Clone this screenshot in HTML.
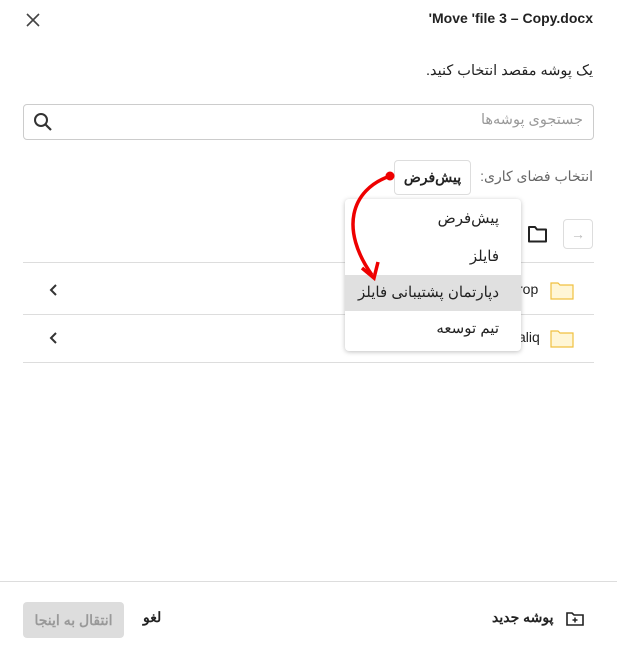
<!DOCTYPE html>
<html><head><meta charset="utf-8"><style>
*{box-sizing:border-box;margin:0;padding:0}
body{width:617px;height:653px;background:#fff;position:relative;overflow:hidden;font-family:"Liberation Sans","Noto Sans CJK SC",sans-serif;color:#222;font-size:14px}
.a{position:absolute}
.r{direction:rtl}
</style></head><body>
<svg class="a" style="left:25px;top:12px" width="16" height="16" viewBox="0 0 16 16"><path d="M2 2L14 14M14 2L2 14" stroke="#444" stroke-width="1.6"/></svg>
<div class="a" style="right:24px;top:10px;font-size:14px;font-weight:bold;color:#222">'Move 'file 3 – Copy.docx</div>
<div class="a r" style="right:24px;top:63px;font-size:14.5px">یک پوشه مقصد انتخاب کنید.</div>
<div class="a" style="left:23px;top:104px;width:571px;height:36px;border:1px solid #ccc;border-radius:4px"></div>
<svg class="a" style="left:33px;top:112px" width="20" height="20" viewBox="0 0 20 20"><circle cx="8" cy="8" r="6" fill="none" stroke="#333" stroke-width="2"/><path d="M12.5 12.5L18 18" stroke="#333" stroke-width="2.2"/></svg>
<div class="a r" style="right:34px;top:112px;color:#999;font-size:14.5px">جستجوی پوشه‌ها</div>
<div class="a r" style="right:24px;top:168px;color:#666;font-size:14px">انتخاب فضای کاری:</div>
<div class="a" style="left:394px;top:160px;width:77px;height:35px;border:1px solid #ddd;border-radius:4px;text-align:center;line-height:33px;font-weight:bold;font-size:14px">پیش‌فرض</div>
<div class="a" style="left:563px;top:219px;width:30px;height:30px;border:1px solid #ddd;border-radius:4px;color:#bbb;text-align:center;line-height:28px">→</div>
<svg class="a" style="left:527px;top:224px" width="22" height="20" viewBox="0 0 22 20"><path d="M2 3h6l2 2.5h9v12H2z" fill="none" stroke="#222" stroke-width="2" stroke-linejoin="round"/></svg>
<div class="a" style="left:23px;top:262px;width:571px;border-top:1px solid #ddd"></div>
<div class="a" style="left:23px;top:314px;width:571px;border-top:1px solid #ddd"></div>
<div class="a" style="left:23px;top:362px;width:571px;border-top:1px solid #ddd"></div>
<div class="a" style="left:518px;top:281px;font-size:14px">rop</div>
<div class="a" style="left:518px;top:329px;font-size:14px">aliq</div>
<svg class="a" style="left:550px;top:282px" width="24" height="18" viewBox="0 0 24 18"><path d="M1 1h7l2 2h13v14H1z" fill="#fff6d6" stroke="#f0c040" stroke-width="1.2"/></svg>
<svg class="a" style="left:550px;top:330px" width="24" height="18" viewBox="0 0 24 18"><path d="M1 1h7l2 2h13v14H1z" fill="#fff6d6" stroke="#f0c040" stroke-width="1.2"/></svg>
<svg class="a" style="left:48px;top:283px" width="12" height="14" viewBox="0 0 12 14"><path d="M8 2L3 7l5 5" fill="none" stroke="#333" stroke-width="2"/></svg>
<svg class="a" style="left:48px;top:331px" width="12" height="14" viewBox="0 0 12 14"><path d="M8 2L3 7l5 5" fill="none" stroke="#333" stroke-width="2"/></svg>
<div class="a r" style="left:345px;top:199px;width:176px;height:152px;background:#fff;border-radius:4px;box-shadow:0 1px 5px rgba(0,0,0,.25);font-size:15px">
<div style="height:40px;line-height:40px;padding-right:22px">پیش‌فرض</div>
<div style="height:36px;line-height:36px;padding-right:22px">فایلز</div>
<div style="height:36px;line-height:36px;padding-right:22px;background:#e0e0e0">دپارتمان پشتیبانی فایلز</div>
<div style="height:36px;line-height:36px;padding-right:22px">تیم توسعه</div>
</div>
<svg class="a" style="left:340px;top:168px" width="60" height="120" viewBox="340 168 60 120"><path d="M390 176C350 190 340 230 372 275" fill="none" stroke="#e00" stroke-width="3.5"/><path d="M362 268L374 278L378 262" fill="none" stroke="#e00" stroke-width="3.5"/><circle cx="390" cy="176" r="4.5" fill="#e00"/></svg>
<div class="a" style="left:0;top:581px;width:617px;border-top:1px solid #ddd"></div>
<div class="a" style="left:23px;top:602px;width:101px;height:36px;background:#ddd;border-radius:4px;color:#999;text-align:center;line-height:36px;font-weight:bold;font-size:14px">انتقال به اینجا</div>
<div class="a" style="left:143px;top:609px;font-weight:bold;font-size:14px">لغو</div>
<div class="a" style="left:492px;top:609px;font-weight:bold;font-size:14px">پوشه جدید</div>
<svg class="a" style="left:566px;top:611px" width="18" height="16" viewBox="0 0 18 16"><path d="M1 2h5l2 2h9v10H1z" fill="none" stroke="#222" stroke-width="1.6"/><path d="M9 6.5v5M6.5 9h5" stroke="#222" stroke-width="1.5"/></svg>
</body></html>
